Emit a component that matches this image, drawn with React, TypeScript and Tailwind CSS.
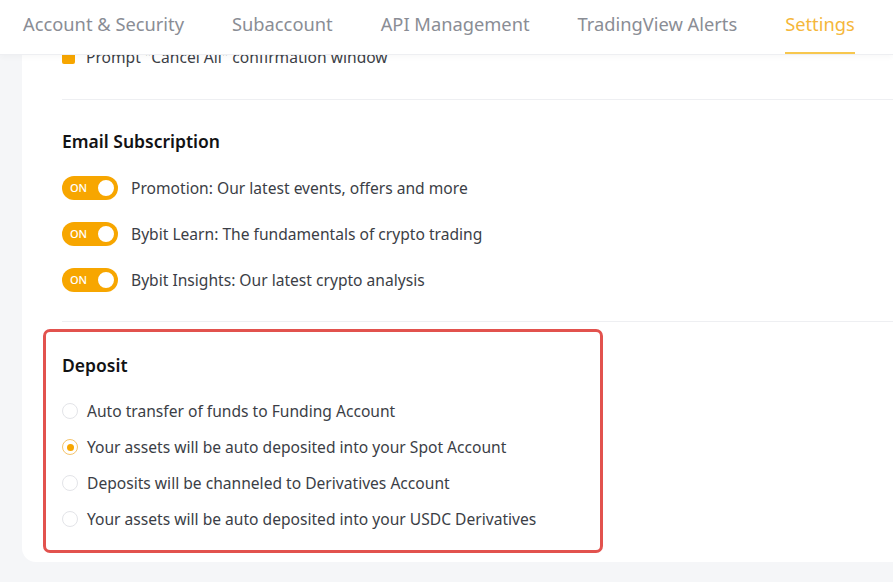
import React from "react"

const tabs = [
  "Account & Security",
  "Subaccount",
  "API Management",
  "TradingView Alerts",
  "Settings",
]

const emails = [
  "Promotion: Our latest events, offers and more",
  "Bybit Learn: The fundamentals of crypto trading",
  "Bybit Insights: Our latest crypto analysis",
]

const deposits = [
  "Auto transfer of funds to Funding Account",
  "Your assets will be auto deposited into your Spot Account",
  "Deposits will be channeled to Derivatives Account",
  "Your assets will be auto deposited into your USDC Derivatives",
]

const Toggle = () => (
  <div className="flex h-[24px] w-[56px] shrink-0 items-center justify-between rounded-full bg-[#f7a600] pl-[8px] pr-[2px]">
    <span className="text-[11px] font-medium text-white">ON</span>
    <span className="h-[20px] w-[20px] rounded-full border-2 border-[#f7a600] bg-white" />
  </div>
)

const Radio = ({ checked }: { checked: boolean }) =>
  checked ? (
    <span className="flex h-[16px] w-[16px] shrink-0 items-center justify-center rounded-full border border-[#f5c46b] bg-white">
      <span className="h-[7px] w-[7px] rounded-full bg-[#f7a600]" />
    </span>
  ) : (
    <span className="h-[16px] w-[16px] shrink-0 rounded-full border border-[#e3e4e8] bg-white" />
  )

export default function App() {
  return (
    <div
      className="flex h-[582px] w-[893px] flex-col overflow-hidden bg-[#f5f6f8]"
      style={{ fontFamily: "'Noto Sans', 'Open Sans', sans-serif" }}
    >
      <div className="z-10 flex h-[55px] shrink-0 items-stretch gap-[48px] border-b border-[#eeeff2] bg-white pl-[23px] shadow-[0_2px_6px_rgba(0,0,0,0.03)]">
        {tabs.map((t) => (
          <div
            key={t}
            className={`flex items-center whitespace-nowrap border-b-2 pb-[4px] text-[18.3px] ${
              t === "Settings"
                ? "border-[#f7c74e] text-[#f5b73b]"
                : "border-transparent text-[#8a8d95]"
            }`}
          >
            {t}
          </div>
        ))}
      </div>

      <div className="ml-[22px] mt-[-1px] flex h-[508px] flex-col rounded-bl-[14px] bg-white">
        <div className="mt-[-8px] flex items-center gap-[11px] pl-[40px] text-[15.6px] text-[#3b3e46]">
          <span className="h-[13px] w-[13px] rounded-[2px] bg-[#f7a600]" />
          Prompt "Cancel All" confirmation window
        </div>

        <div className="ml-[40px] mt-[30px] border-t border-[#eeeff2]" />

        <div className="pl-[40px] pt-[29px]">
          <div className="text-[17.5px] leading-[24px] font-semibold text-[#121214]">Email Subscription</div>
          <div className="mt-[23px] flex flex-col gap-[22px]">
            {emails.map((e) => (
              <div key={e} className="flex items-center gap-[13px] text-[15.6px] leading-[22px] text-[#3b3e46]">
                <Toggle />
                {e}
              </div>
            ))}
          </div>
        </div>

        <div className="ml-[40px] mt-[29px] border-t border-[#eeeff2]" />

        <div className="ml-[21px] mt-[7px] w-[560px] rounded-[7px] border-[3px] border-[#e2524e] px-[16px] pb-[20px] pt-[21px]">
          <div className="text-[17.5px] leading-[24px] font-semibold text-[#121214]">Deposit</div>
          <div className="mt-[23px] flex flex-col gap-[14px]">
            {deposits.map((d, i) => (
              <div key={d} className="flex items-center gap-[9px] text-[15.6px] leading-[22px] text-[#3b3e46]">
                <Radio checked={i === 1} />
                {d}
              </div>
            ))}
          </div>
        </div>
      </div>
    </div>
  )
}
